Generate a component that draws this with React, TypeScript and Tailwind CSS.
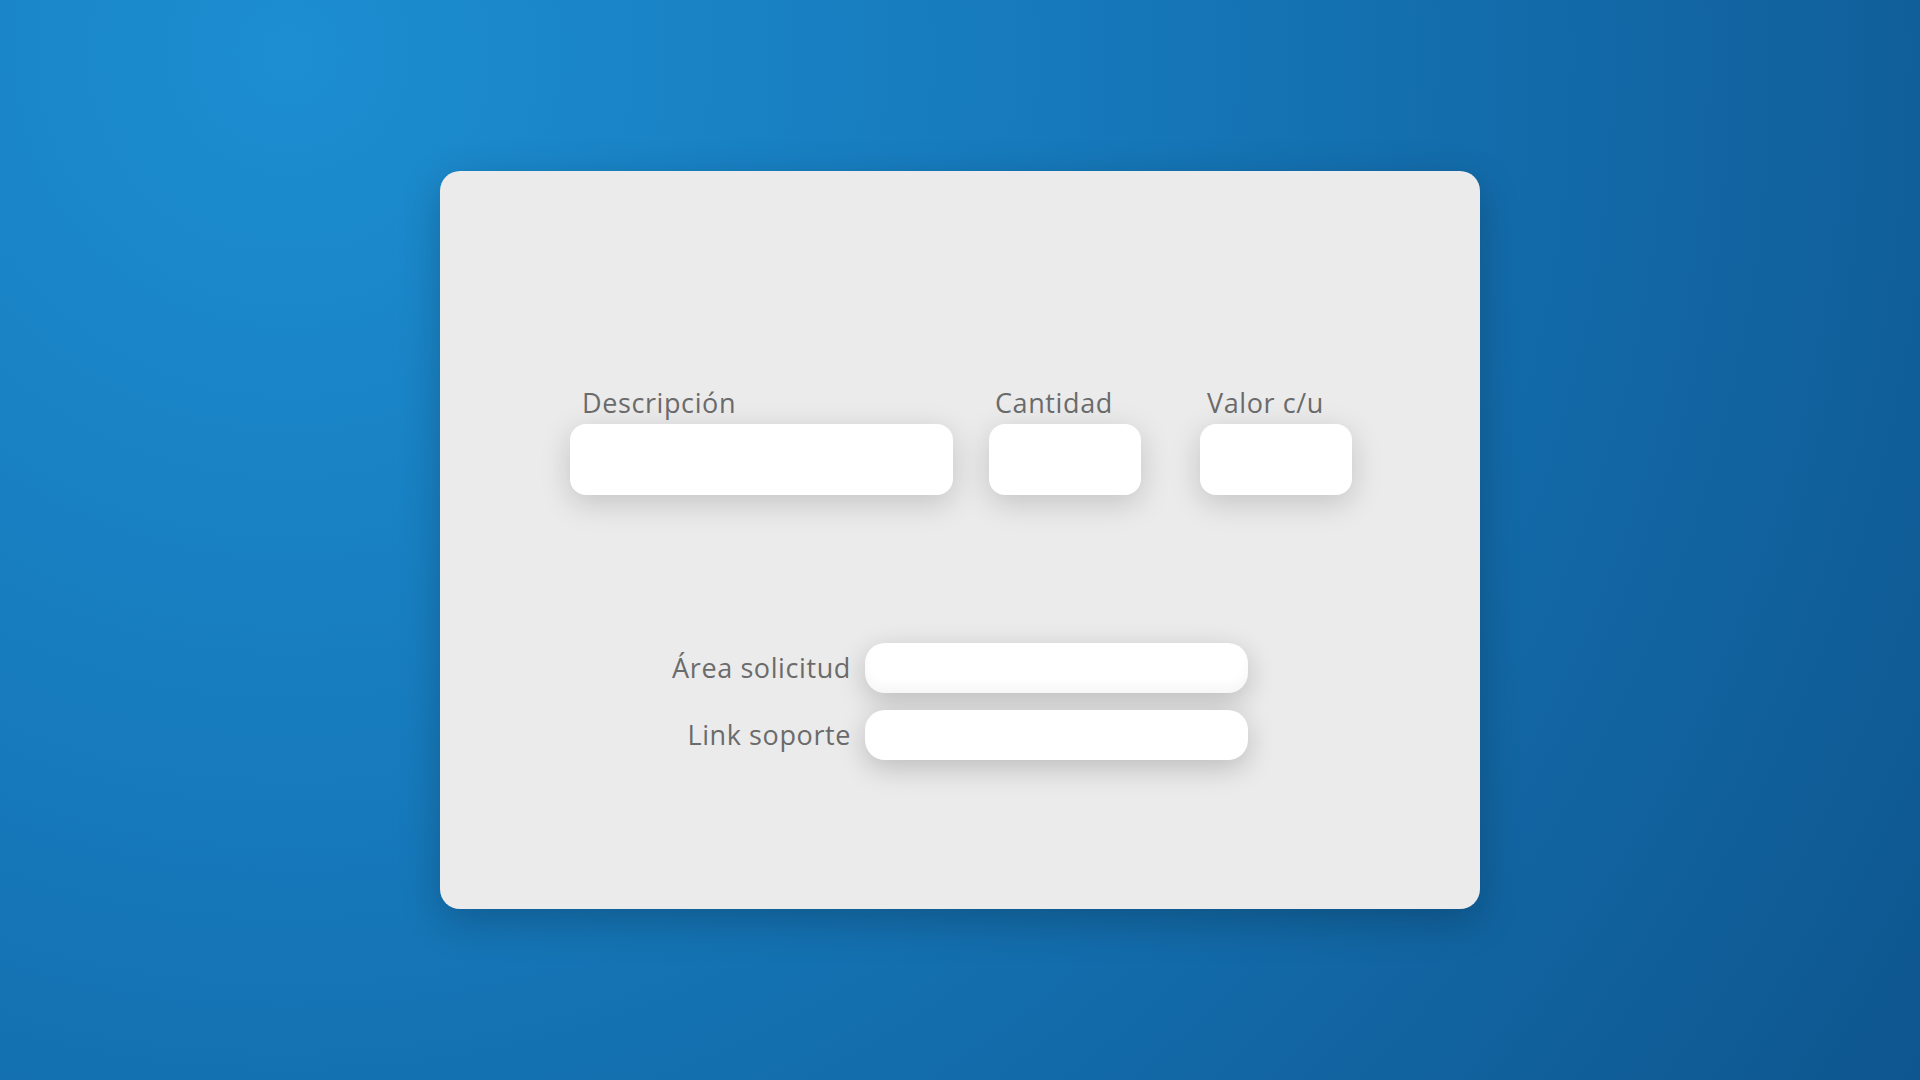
import React from "react";

const font = { fontFamily: "'Open Sans', 'Noto Sans', sans-serif" };

function Field({ label, width, indent }: { label: string; width: string; indent: string }) {
  return (
    <div className="flex flex-col">
      <label className={`text-[27px] leading-[34px] tracking-[0.6px] text-[#6b6b6b] mb-[4px] ${indent}`}>{label}</label>
      <input
        type="text"
        className={`${width} h-[71px] rounded-[16px] bg-white outline-none border-0 shadow-[0_8px_30px_rgba(0,0,0,0.17)]`}
      />
    </div>
  );
}

export default function App() {
  return (
    <div
      className="min-h-screen w-full flex items-center justify-center bg-[radial-gradient(circle_at_15%_5%,#1c8ed1_0%,#1679bb_40%,#0e568f_100%)]"
      style={font}
    >
      <div className="w-[1040px] h-[738px] rounded-[20px] bg-[#ebebeb] shadow-[0_12px_40px_rgba(0,0,0,0.22)] pt-[215px]">
        {/* Fila de detalle */}
        <div className="flex pl-[130px]">
          <Field label="Descripción" width="w-[383px]" indent="pl-[12px]" />
          <div className="ml-[36px]">
            <Field label="Cantidad" width="w-[152px]" indent="pl-[6px]" />
          </div>
          <div className="ml-[59px]">
            <Field label="Valor c/u" width="w-[152px]" indent="pl-[7px]" />
          </div>
        </div>

        {/* Datos adicionales */}
        <div className="grid grid-cols-[425px_383px] gap-y-[17px] mt-[148px]">
          <label className="text-right pr-[14px] text-[27px] leading-[34px] tracking-[0.6px] text-[#6b6b6b] self-center">Área solicitud</label>
          <input
            type="text"
            className="h-[50px] rounded-[20px] bg-white outline-none border-0 shadow-[0_8px_28px_rgba(0,0,0,0.2),inset_0_-8px_10px_rgba(0,0,0,0.03)]"
          />
          <label className="text-right pr-[14px] text-[27px] leading-[34px] tracking-[0.6px] text-[#6b6b6b] self-center">Link soporte</label>
          <input
            type="text"
            className="h-[50px] rounded-[20px] bg-white outline-none border-0 shadow-[0_8px_28px_rgba(0,0,0,0.2)]"
          />
        </div>
      </div>
    </div>
  );
}
